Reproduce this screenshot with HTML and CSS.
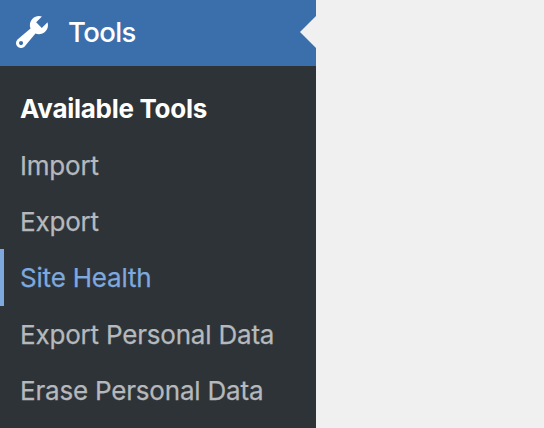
FILE: index.html
```html
<!DOCTYPE html>
<html lang="en">
<head>
<meta charset="utf-8">
<title>Tools</title>
<link rel="stylesheet" href="styles.css">
</head>
<body>
<nav class="sidebar">
  <a class="menu-head">
    <svg class="icon" viewBox="0 0 20 20"><path d="M16.68 9.77c-1.34 1.34-3.3 1.67-4.95.99l-5.41 6.52c-.99.99-2.59.99-3.58 0s-.99-2.59 0-3.57l6.52-5.42c-.68-1.65-.35-3.61.99-4.95 1.28-1.28 3.12-1.62 4.72-1.06l-2.89 2.89 2.82 2.82 2.86-2.87c.53 1.58.18 3.39-1.08 4.65zM3.81 16.21c.4.39 1.04.39 1.43 0 .4-.4.4-1.04 0-1.43-.39-.4-1.03-.4-1.43 0-.39.39-.39 1.03 0 1.43z"/></svg>
    <span>Tools</span>
    <i class="arrow"></i>
  </a>
  <ul class="submenu">
    <li class="current"><span>Available Tools</span></li>
    <li><span>Import</span></li>
    <li><span>Export</span></li>
    <li class="hover"><span>Site Health</span></li>
    <li><span>Export Personal Data</span></li>
    <li><span>Erase Personal Data</span></li>
  </ul>
</nav>
</body>
</html>
```
FILE: styles.css
```css
body {
  margin: 0;
  height: 428px;
  overflow: hidden;
  background: #f0f0f0;
  font-family: Inter, sans-serif;
}
.sidebar {
  width: 316px;
  height: 428px;
  background: #2e3337;
}
.menu-head {
  position: relative;
  display: flex;
  align-items: center;
  gap: 16px;
  height: 66px;
  padding: 0 0 2px 12px;
  box-sizing: border-box;
  background: #3b6fac;
  color: #fff;
  font-size: 27.5px;
  font-weight: 450;
  letter-spacing: -0.6px;
}
.icon {
  width: 40px;
  height: 40px;
  fill: #fff;
}
.arrow {
  position: absolute;
  right: 0;
  top: 16px;
  border: 16px solid transparent;
  border-left-width: 0;
  border-right-color: #f0f0f0;
}
.submenu {
  margin: 0;
  padding: 14.2px 0 0;
  list-style: none;
}
.submenu li {
  height: 56.4px;
  line-height: 58.6px;
  padding-left: 20px;
  color: #b5b9bd;
  font-size: 26px;
  -webkit-text-stroke: 0.25px;
  letter-spacing: -0.2px;
  white-space: nowrap;
}
.submenu .current {
  color: #fff;
  font-weight: 650;
  letter-spacing: -0.28px;
  -webkit-text-stroke: 0;
}
.submenu .hover {
  color: #7ea9de;
  box-shadow: inset 4px 0 #7ea9de;
}
```
